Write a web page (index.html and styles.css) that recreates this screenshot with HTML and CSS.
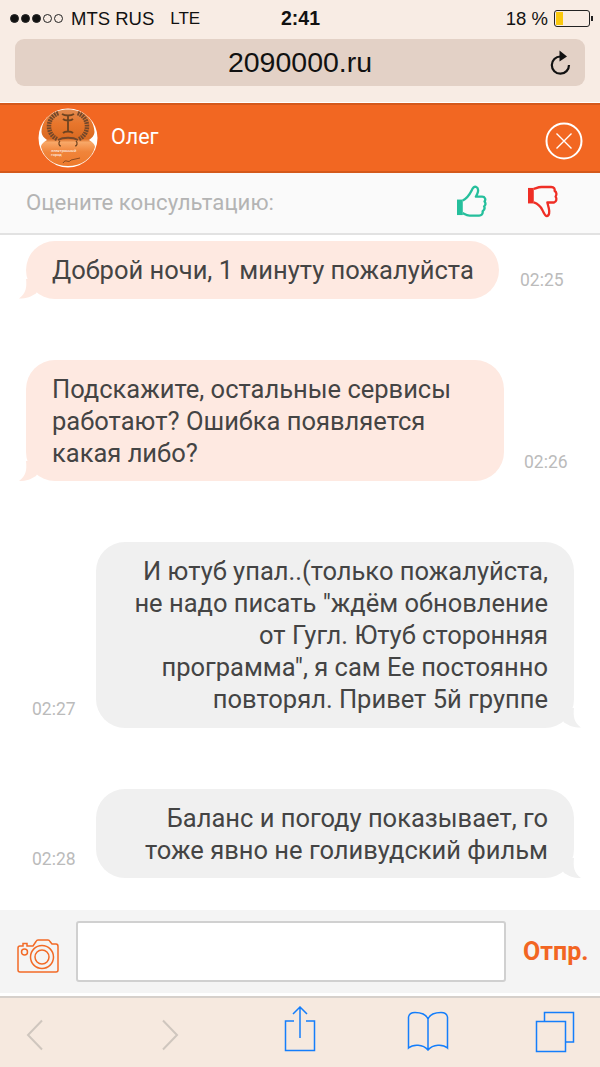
FILE: index.html
```html
<!DOCTYPE html>
<html lang="ru">
<head>
<meta charset="utf-8">
<title>2090000.ru</title>
<link rel="stylesheet" href="styles.css">
</head>
<body>
<div class="page">
  <header class="browser-top">
    <div class="status">
      <div class="status-left">
        <span class="signal"><i class="dot on"></i><i class="dot on"></i><i class="dot on"></i><i class="dot"></i><i class="dot"></i></span>
        <span class="carrier">MTS RUS</span>
        <span class="net">LTE</span>
      </div>
      <div class="clock">2:41</div>
      <div class="status-right">
        <span>18 %</span>
        <span class="battery"><span class="battery-fill"></span></span>
      </div>
    </div>
    <div class="address">
      <span class="url">2090000.ru</span>
      <svg class="reload" viewBox="0 0 24 26" width="24" height="26"><path d="M12.5 6.5 A8.6 8.6 0 1 0 21 15" fill="none" stroke="#111" stroke-width="2.2"/><path d="M11.500 0.500 L19 6.500 L11.500 11.500 Z" fill="#111"/></svg>
    </div>
  </header>

  <div class="agent">
    <svg class="avatar" viewBox="0 0 60 60" width="60" height="60">
      <defs>
        <linearGradient id="ag" x1="0" y1="0" x2="0" y2="1">
          <stop offset="0" stop-color="#e08a50"/><stop offset=".25" stop-color="#e8762c"/><stop offset=".52" stop-color="#d96a22"/><stop offset=".58" stop-color="#f8a868"/><stop offset=".75" stop-color="#f0843a"/><stop offset="1" stop-color="#ee7a2c"/>
        </linearGradient>
      </defs>
      <circle cx="30" cy="30" r="29.500" fill="#fff"/>
      <path d="M30 1.500 C46 1.500 56 11 56.500 24 C56.500 27 54 30 51 32 C54 34 57 36 57 39 C54 51 43 58 30 58 C17 58 6 51 3 39 C3 36 6 34 9 32 C6 30 3.500 27 3.500 24 C4 11 14 1.500 30 1.500 Z" fill="url(#ag)"/>
      <path d="M19 31 C8 26 8 9 21 5 M41 31 C52 26 52 9 39 5" fill="none" stroke="#74482a" stroke-width="4.500" stroke-dasharray="1.800 .8"/>
      <path d="M20 32 C25 29 35 29 40 32" fill="none" stroke="#74482a" stroke-width="2"/>
      <path d="M24 6 C27 8 33 8 36 6 M30 7 V24 M25 11 C27 13 33 13 35 11 M25 25 C27 23 33 23 35 25" fill="none" stroke="#6e4320" stroke-width="1.800"/>
      <path d="M22 33 C20 35 21 38 23 38 M38 33 C40 35 39 38 37 38" fill="none" stroke="#6e4320" stroke-width="1.200"/>
      <text class="avatar-text" x="13" y="44">электронный</text>
      <text class="avatar-text" x="13" y="48">город</text>
      <path d="M25 55 C28 50 30 56 33 52 L42 50" fill="none" stroke="#8a4a20" stroke-width="1"/>
    </svg>
    <span class="agent-name">Олег</span>
    <svg class="close" viewBox="0 0 38 38" width="38" height="38"><circle cx="19" cy="19" r="17.500" fill="none" stroke="#fff" stroke-width="2"/><path d="M11.500 11.500 L26.500 26.500 M26.500 11.500 L11.500 26.500" stroke="#fff" stroke-width="1.400"/></svg>
  </div>

  <div class="rate">
    <span class="rate-label">Оцените консультацию:</span>
    <div class="rate-icons">
      <svg viewBox="0 0 32 34" width="31" height="33"><path d="M1 15 H7 V31 H1 Z" fill="#25bf9c"/><path d="M7 16 C11 14 14 10 16 6 C17 3 19 1 21 2 C23.500 3 23 7 22 9 L20.500 12 H27 C30 12 31 15 29.500 17 C31 19 30.500 21 29 22 C30 24 29 26 27.500 27 C28 30 26 31.500 24 31.500 H14 C11 31.500 9 30 7 29" fill="none" stroke="#25bf9c" stroke-width="2.400" stroke-linejoin="round"/></svg>
      <svg viewBox="0 0 32 34" width="31" height="33"><path d="M1 3 H7 V19 H1 Z" fill="#ef2e25"/><path d="M7 4 C10 3 12 2 15 2 H25 C28 2 29 4 28.500 6 C30.500 7 31 10 29.500 12 C31 14 30.500 17 28 18 H21 L22.500 24 C23.500 28 23 32 20.500 32 C18.500 32 17.500 29 16 26 C14 22 10 19 7 18" fill="none" stroke="#ef2e25" stroke-width="2.400" stroke-linejoin="round"/></svg>
    </div>
  </div>

  <main class="chat">
    <div class="msg in first">
      <div class="bubble b-one">Доброй ночи, 1 минуту пожалуйста</div>
      <time class="stamp">02:25</time>
    </div>
    <div class="msg in">
      <div class="bubble b-wide">Подскажите, остальные сервисы<br>работают? Ошибка появляется<br>какая либо?</div>
      <time class="stamp">02:26</time>
    </div>
    <div class="msg out">
      <time class="stamp">02:27</time>
      <div class="bubble b-wide">И ютуб упал..(только пожалуйста,<br>не надо писать "ждём обновление<br>от Гугл. Ютуб сторонняя<br>программа", я сам Ее постоянно<br>повторял. Привет 5й группе</div>
    </div>
    <div class="msg out">
      <time class="stamp">02:28</time>
      <div class="bubble b-wide">Баланс и погоду показывает, го<br>тоже явно не голивудский фильм</div>
    </div>
  </main>

  <div class="composer">
    <svg class="camera" viewBox="0 0 42 34" width="42" height="34"><g fill="none" stroke="#f26a26" stroke-width="1.500"><path d="M3 7 H6 V4.500 H10 V7 H16 L19 2.500 C19.500 1.500 20 1 21 1 H31 C32 1 32.500 1.500 33 2.500 L35 5 H39 C40 5 41 6 41 7.500 V31 C41 32 40 33 39 33 H3 C2 33 1 32 1 31 V9 C1 8 2 7 3 7 Z"/><circle cx="25" cy="18" r="11.500"/><circle cx="25" cy="18" r="7"/><circle cx="7.500" cy="13" r="3"/></g></svg>
    <div class="field"></div>
    <span class="send">Отпр.</span>
  </div>

  <footer class="toolbar">
    <svg viewBox="0 0 18 32" width="18" height="32" class="nav-back"><path d="M16 1.500 L2 16 L16 30.500" fill="none" stroke="#cfc6be" stroke-width="2"/></svg>
    <svg viewBox="0 0 18 32" width="18" height="32" class="nav-fwd"><path d="M2 1.500 L16 16 L2 30.500" fill="none" stroke="#cfc6be" stroke-width="2"/></svg>
    <svg viewBox="0 0 32 46" width="32" height="46" class="nav-share"><g fill="none" stroke="#147efb" stroke-width="1.500"><path d="M10 15 H1.500 V44.500 H30.500 V15 H22"/><path d="M16 1 V32 M9 8 L16 1 L23 8"/></g></svg>
    <svg viewBox="0 0 42 40" width="42" height="40" class="nav-book"><g fill="none" stroke="#147efb" stroke-width="1.500"><path d="M21 8 C19 3 14 1.500 8 1.500 C5 1.500 2 3 1.500 6 V37 C6 33 16 33 21 39 C26 33 36 33 40.500 37 V6 C40 3 37 1.500 34 1.500 C28 1.500 23 3 21 8 V39"/></g></svg>
    <svg viewBox="0 0 40 42" width="40" height="42" class="nav-tabs"><g fill="none" stroke="#147efb" stroke-width="1.500"><path d="M9.500 10 V1.500 H38.500 V31 H31"/><path d="M1.500 10.500 H30.500 V40.500 H1.500 Z"/></g></svg>
  </footer>
</div>
</body>
</html>
```
FILE: styles.css
```css
* { box-sizing: border-box; }
html, body { margin: 0; padding: 0; }
body { background: #fff; font-family: "Roboto", "Liberation Sans", sans-serif; }
.page { width: 600px; height: 1067px; display: flex; flex-direction: column; overflow: hidden; }

.browser-top { height: 102px; background: #f8ece4; padding: 0 15px; flex: none; }
.status { height: 37px; display: grid; grid-template-columns: 1fr auto 1fr; align-items: center; font-family: "Liberation Sans", sans-serif; font-size: 18.500px; color: #111; margin: 0 -5px; }
.status-left { display: flex; align-items: center; }
.signal { display: flex; gap: 2px; margin-right: 8px; }
.dot { width: 9px; height: 9px; border-radius: 50%; border: 1px solid #222; }
.dot.on { background: #111; }
.net { margin-left: 16px; font-size: 17px; }
.clock { font-weight: 700; font-size: 19.500px; padding-left: 1px; }
.status-right { display: flex; justify-content: flex-end; align-items: center; gap: 6px; }
.battery { width: 36px; height: 17px; border: 1px solid #222; border-radius: 3px; padding: 1px; position: relative; }
.battery::after { content: ""; position: absolute; right: -4px; top: 5px; width: 2px; height: 5px; background: #222; }
.battery-fill { display: block; width: 7px; height: 100%; background: #f9c80e; }
.address { height: 47px; margin-top: 2px; background: #e3d1c6; border-radius: 9px; display: flex; align-items: center; justify-content: center; position: relative; }
.url { font-family: "Liberation Sans", sans-serif; font-size: 28.500px; color: #111; }
.reload { position: absolute; right: 13px; top: 11px; }

.agent { height: 70px; flex: none; margin-top: 1px; background: #f26722; border-top: 2px solid #d4591c; border-bottom: 2px solid #d4591c; display: flex; align-items: center; padding: 0 17px 0 38px; color: #fff; }
.avatar { flex: none; }
.avatar-text { font-family: "Roboto", sans-serif; font-size: 4px; fill: #fff; }
.agent-name { font-size: 21.500px; margin-left: 13px; flex: 1; margin-top: -3px; }
.close { margin-top: 5px; }

.rate { height: 62px; flex: none; background: #fafafa; border-bottom: 2px solid #e2e2e2; display: flex; align-items: center; justify-content: space-between; padding: 0 42px 0 26px; }
.rate-label { font-size: 22.200px; color: #b4b4b4; margin-top: -2px; }
.rate-icons { display: flex; gap: 40px; margin-left: 0; margin-top: -4px; }

.chat { flex: 1; min-height: 0; overflow: hidden; padding-top: 6px; display: flex; flex-direction: column; gap: 61px; }
.msg { display: flex; align-items: flex-end; flex: none; }
.msg.in { padding-left: 26px; }
.msg.out { padding-left: 32px; }
.bubble { position: relative; font-size: 25.500px; line-height: 32px; color: #444; padding: 13px 26px 12.500px; border-radius: 29px; white-space: nowrap; }
.in .bubble { background: #fee9e1; text-align: left; }
.out .bubble { background: #f0f0f0; text-align: right; }
.b-one { width: 473px; }
.b-wide { width: 478px; }
.bubble::after { content: ""; position: absolute; bottom: 0; width: 26px; height: 20px; background: inherit; }
.in .bubble::after { left: -7px; clip-path: path("M7 0 C8 9 7 15 0 20 C8 20 12 18 17 15 L26 0 Z"); }
.out .bubble::after { right: -7px; clip-path: path("M19 0 C18 9 19 15 26 20 C18 20 14 18 9 15 L0 0 Z"); }
.stamp { font-size: 17.500px; color: #bbb; line-height: 20px; }
.in .stamp { margin: 0 0 9px 20px; }
.out .stamp { width: 64px; flex: none; margin-bottom: 9px; }
.first .stamp { margin: 0 0 9px 21px; }

.composer { height: 83px; flex: none; background: #f4f4f4; display: flex; align-items: center; padding: 0 11px 0 17px; }
.camera { flex: none; margin-top: 8px; }
.field { width: 430px; height: 61px; margin-left: 17px; background: #fff; border: 2px solid #d0d0d0; border-radius: 3px; }
.send { margin-left: 17px; font-size: 25px; font-weight: 700; color: #f26522; }

.toolbar { flex: none; height: 71px; margin-top: 3px; background: #f6e9df; border-top: 2px solid #d6d0cb; position: relative; }
.toolbar svg { position: absolute; }
.nav-back { left: 26px; top: 21px; }
.nav-fwd { left: 161px; top: 21px; }
.nav-share { left: 284px; top: 8px; }
.nav-book { left: 407px; top: 13px; }
.nav-tabs { left: 535px; top: 13px; }
```
